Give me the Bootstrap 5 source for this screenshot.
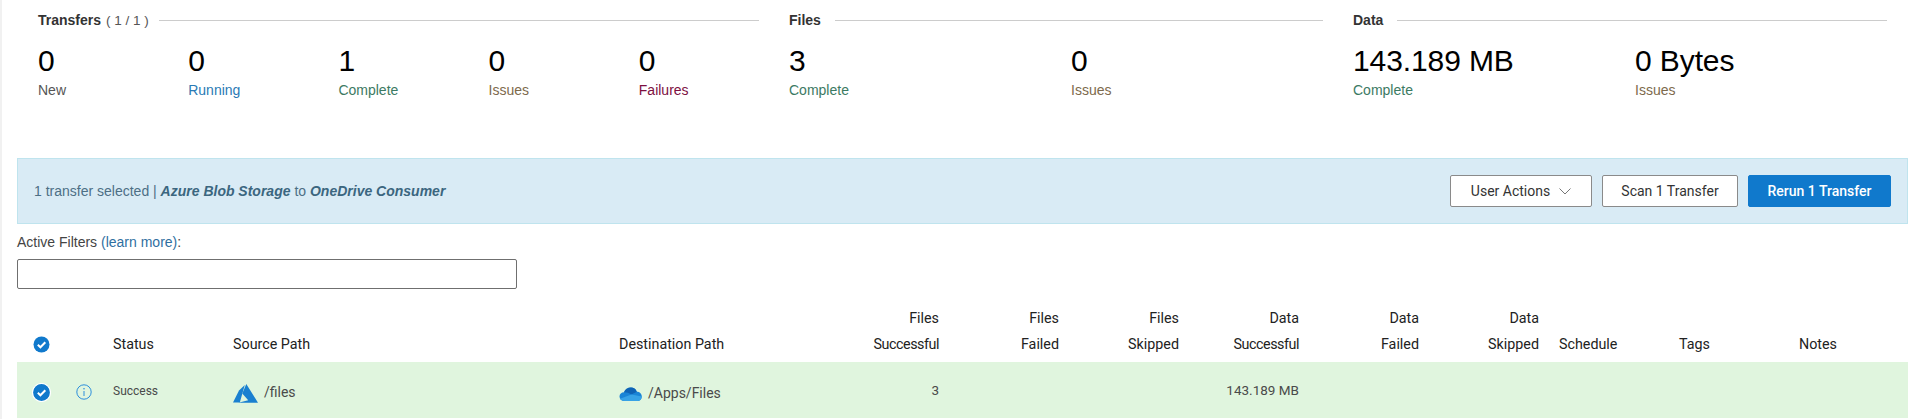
<!DOCTYPE html>
<html lang="en">
<head>
<meta charset="utf-8">
<title>Transfers</title>
<link href="https://cdn.jsdelivr.net/npm/bootstrap@5.3.0/dist/css/bootstrap.min.css" rel="stylesheet">
<style>
html,body{height:419px;overflow:hidden;background:#fff}
body{font-family:"Liberation Sans",Arial,sans-serif;font-size:14px;color:#333}
.shell{border-left:2px solid #f1f1f1;height:419px}
.summary{padding:0 0 0 36px;height:158px}
.sec-transfers{width:751px}
.sec-half{width:565px}
.sec-head{height:41px;padding-right:30px;font-size:14px;line-height:41px}
.sec-head b{font-weight:700;color:#333}
.sec-head .cnt{color:#555;margin-left:5px;font-size:13.5px}
.sec-rule{height:1px;background:#ccc;margin-left:14px;flex:1 1 auto}
.cnt+.sec-rule{margin-left:10px}
.stat{line-height:1;padding-top:2px}
.stat-num{font-size:30px;line-height:36px;color:#000;letter-spacing:-.1px}
.stat-lbl{font-size:14px;line-height:20px;margin-top:1px}
.w5{width:150.5px}
.w2{width:282px}
.c-new{color:#555}.c-run{color:#2a7ab5}.c-ok{color:#3c7a63}.c-warn{color:#7d6a4c}.c-bad{color:#7d0f3f}
.banner{margin-left:15px;height:66px;background:#d9ebf5;border:1px solid #bfe4ee;padding:0 16px 0 16px;color:#4d6f85;font-size:14px}
.banner b{color:#3b667f;font-style:italic}
.uibtn{font-family:Roboto,"Noto Sans",sans-serif;font-size:14px;height:32px;border-radius:2px;border:1px solid #8a8a8a;background:#fff;color:#333;padding:0;display:flex;align-items:center;justify-content:center}
.acts{gap:10px}
.b1{width:142px;gap:9px}.b2{width:136px}.b3{width:143px;background:#1079cc;border-color:#1079cc;color:#fff;font-weight:500}
.b3:hover{background:#1079cc;border-color:#1079cc;color:#fff}
.filters{padding-left:15px}
.filters-lbl{font-size:14px;line-height:18px;margin-top:9px;color:#444}
.filters-lbl a{color:#2f6f9f;text-decoration:none}
.filters-box{display:block;width:500px;height:30px;margin-top:8px;border:1px solid #6f6f6f;border-radius:2px;background:#fff}
.xfer{table-layout:fixed;width:1891px;margin:17px 0 0 15px;border-collapse:collapse;font-family:Roboto,"Noto Sans",sans-serif}
.xfer th{font-weight:400;font-size:14.3px;color:#222;line-height:25.5px;padding:0 8px 5px 12px;vertical-align:bottom;white-space:nowrap}
.xfer td{background:#e0f5de;height:56px;padding:0 8px 0 12px;vertical-align:middle;color:#4a4a4a;font-size:14px;white-space:nowrap}
.xfer .num{text-align:right;font-size:13.5px}
.xfer th.num{font-size:14.3px}
.succ{letter-spacing:-.45px}
.xfer .ic{padding:0;text-align:center}
.xfer th.ic{padding-bottom:9px}
.xfer td.ic{padding-top:4px}
.xfer .low{padding-top:6px}
.st{font-size:12px}
.tick{display:block;margin:0 auto}
.ic-l{display:inline-block;vertical-align:middle;margin-right:6px}
.info{position:relative;left:1px}
</style>
</head>
<body>
<div class="shell">
  <div class="summary d-flex">
    <section class="sec-transfers">
      <div class="sec-head d-flex align-items-center"><b>Transfers</b><span class="cnt">( 1 / 1 )</span><span class="sec-rule"></span></div>
      <div class="d-flex">
        <div class="stat w5"><div class="stat-num">0</div><div class="stat-lbl c-new">New</div></div>
        <div class="stat w5"><div class="stat-num">0</div><div class="stat-lbl c-run">Running</div></div>
        <div class="stat w5"><div class="stat-num">1</div><div class="stat-lbl c-ok">Complete</div></div>
        <div class="stat w5"><div class="stat-num">0</div><div class="stat-lbl c-warn">Issues</div></div>
        <div class="stat w5"><div class="stat-num">0</div><div class="stat-lbl c-bad">Failures</div></div>
      </div>
    </section>
    <section class="sec-half">
      <div class="sec-head d-flex align-items-center"><b>Files</b><span class="sec-rule"></span></div>
      <div class="d-flex">
        <div class="stat w2"><div class="stat-num">3</div><div class="stat-lbl c-ok">Complete</div></div>
        <div class="stat w2"><div class="stat-num">0</div><div class="stat-lbl c-warn">Issues</div></div>
      </div>
    </section>
    <section class="sec-half">
      <div class="sec-head d-flex align-items-center"><b>Data</b><span class="sec-rule"></span></div>
      <div class="d-flex">
        <div class="stat w2"><div class="stat-num">143.189 MB</div><div class="stat-lbl c-ok">Complete</div></div>
        <div class="stat w2"><div class="stat-num">0 Bytes</div><div class="stat-lbl c-warn">Issues</div></div>
      </div>
    </section>
  </div>

  <div class="banner d-flex align-items-center justify-content-between">
    <div>1 transfer selected | <b>Azure Blob Storage</b> to <b>OneDrive Consumer</b></div>
    <div class="d-flex acts">
      <button type="button" class="btn uibtn b1">User Actions
        <svg width="12" height="7" viewBox="0 0 12 7" fill="none" stroke="#777" stroke-width="1"><path d="M.5.5l5.500 5.500 5.500-5.500"/></svg>
      </button>
      <button type="button" class="btn uibtn b2">Scan 1 Transfer</button>
      <button type="button" class="btn uibtn b3">Rerun 1 Transfer</button>
    </div>
  </div>

  <div class="filters">
    <div class="filters-lbl">Active Filters <a href="#">(learn more)</a>:</div>
    <input class="filters-box" type="text" aria-label="Active Filters">
  </div>

  <table class="xfer">
    <colgroup>
      <col style="width:48px"><col style="width:36px"><col style="width:120px"><col style="width:386px"><col style="width:220px">
      <col style="width:120px"><col style="width:120px"><col style="width:120px"><col style="width:120px"><col style="width:120px"><col style="width:120px">
      <col style="width:120px"><col style="width:120px"><col style="width:121px">
    </colgroup>
    <thead>
      <tr>
        <th class="ic">
          <svg class="tick" width="17" height="17" viewBox="0 0 17 17"><circle cx="8.5" cy="8.5" r="8" fill="#1079cc"/><path d="M4.800 8.800l2.600 2.500 4.900-5" fill="none" stroke="#fff" stroke-width="2"/></svg>
        </th>
        <th></th>
        <th>Status</th>
        <th>Source Path</th>
        <th>Destination Path</th>
        <th class="num">Files<br><span class="succ">Successful</span></th>
        <th class="num">Files<br>Failed</th>
        <th class="num">Files<br>Skipped</th>
        <th class="num">Data<br><span class="succ">Successful</span></th>
        <th class="num">Data<br>Failed</th>
        <th class="num">Data<br>Skipped</th>
        <th>Schedule</th>
        <th>Tags</th>
        <th>Notes</th>
      </tr>
    </thead>
    <tbody>
      <tr>
        <td class="ic">
          <svg class="tick" width="19" height="19" viewBox="0 0 19 19"><circle cx="9.500" cy="9.500" r="9" fill="#1079cc" stroke="#fff" stroke-width="1.200"/><path d="M5.800 9.800l2.600 2.500 4.900-5" fill="none" stroke="#fff" stroke-width="2"/></svg>
        </td>
        <td class="ic">
          <svg class="tick info" width="16" height="16" viewBox="0 0 16 16"><circle cx="8" cy="8" r="7.200" fill="none" stroke="#2d8fdc" stroke-width="1"/><path d="M8 7v5" stroke="#2d8fdc" stroke-width="1"/><circle cx="8" cy="4.700" r=".8" fill="#2d8fdc"/></svg>
        </td>
        <td><span class="st">Success</span></td>
        <td class="low"><svg class="ic-l" width="25" height="20" viewBox="0 0 25 20"><path d="M11.800 1L6 6.500 0 18.500h6.800z" fill="#1a80d0"/><path d="M13.300 0L9.300 9.500 15.200 16.300 5.300 18.700H25z" fill="#1a80d0"/></svg><span>/files</span></td>
        <td class="low"><svg class="ic-l" width="23" height="14" viewBox="0 0 23 14"><path d="M5.500 14C2.500 14 .5 12 .5 9.500.5 7 2.500 5.300 5 5.200 6 2.500 8.800.6 12 .6c2.600 0 4.800 1.400 5.800 4.100 3 0 5 2.100 5 4.800 0 2.500-1.800 4.500-4.300 4.500z" fill="#1a84d6"/><path d="M5 5.200C6 2.500 8.800.6 12 .6c2.600 0 4.800 1.400 5.800 4.100L12.500 7.500 9 5.800z" fill="#0f63b5"/><path d="M1 11.800C1.700 13.100 3.400 14 5.500 14h13c2.500 0 4.300-2 4.300-4.500l-10.300-2z" fill="#37a2e6"/></svg><span>/Apps/Files</span></td>
        <td class="num">3</td>
        <td></td>
        <td></td>
        <td class="num">143.189 MB</td>
        <td></td><td></td><td></td><td></td><td></td>
      </tr>
    </tbody>
  </table>
</div>
</body>
</html>
